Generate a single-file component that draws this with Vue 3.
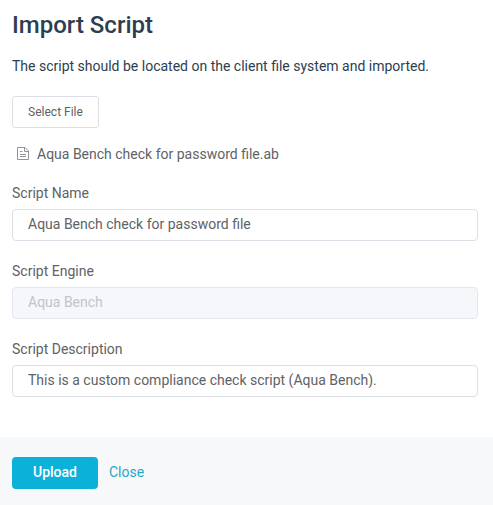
<script setup>
import { ref } from 'vue'

const fileName = 'Aqua Bench check for password file.ab'
const fields = ref([
  { id: 'name', label: 'Script Name', value: 'Aqua Bench check for password file', disabled: false },
  { id: 'engine', label: 'Script Engine', value: 'Aqua Bench', disabled: true },
  { id: 'description', label: 'Script Description', value: 'This is a custom compliance check script (Aqua Bench).', disabled: false },
])
</script>

<template>
  <form class="dialog" @submit.prevent>
    <main class="body">
      <h1 class="title">Import Script</h1>
      <p class="intro">The script should be located on the client file system and imported.</p>
      <button type="button" class="select">Select File</button>
      <div class="file">
        <svg class="file-icon" width="12" height="13" viewBox="0 0 12 13" fill="none" stroke="currentColor">
          <path d="M0.5 0.5H8L11.5 4V12.5H0.5Z" />
          <path d="M7.5 0.5V4.5H11.5M3 4.5H5.5M3 7.5H9M3 9.5H9" />
        </svg>
        <span>{{ fileName }}</span>
      </div>
      <div v-for="field in fields" :key="field.id" class="field">
        <label class="label" :for="field.id">{{ field.label }}</label>
        <input :id="field.id" v-model="field.value" class="input" :disabled="field.disabled" />
      </div>
    </main>
    <footer class="footer">
      <button type="submit" class="upload">Upload</button>
      <button type="button" class="close">Close</button>
    </footer>
  </form>
</template>

<style>
body {
  background: #fff;
}
</style>

<style scoped>
.dialog {
  display: flex;
  flex-direction: column;
  min-height: 505px;
  box-sizing: border-box;
  font-family: Roboto, "Liberation Sans", sans-serif;
  font-size: 14px;
  color: #606266;
}

.body {
  height: 437px;
  box-sizing: border-box;
  padding: 9px 15px 0 12px;
}

.title {
  margin: 0;
  font-size: 24px;
  font-weight: 500;
  line-height: 32px;
  color: #2c3e50;
}

.intro {
  margin: 15px 0 20px;
  line-height: 20px;
  color: #2c3e50;
}

button {
  display: block;
  box-sizing: border-box;
  height: 32px;
  margin: 0;
  padding: 0;
  font-family: inherit;
  cursor: pointer;
}

.select {
  width: 87px;
  border: 1px solid #dcdfe6;
  border-radius: 3px;
  background: #fff;
  color: #606266;
  font-size: 12px;
}

.file {
  display: flex;
  align-items: center;
  gap: 8px;
  height: 20px;
  margin: 16px 0 19px;
  padding-left: 5px;
}

.file-icon {
  flex: none;
  margin-bottom: 1px;
  color: #909399;
}

.field {
  height: 78px;
}

.label {
  display: block;
  height: 26px;
  line-height: 20px;
}

.input {
  display: block;
  width: 100%;
  height: 32px;
  box-sizing: border-box;
  margin: 0;
  padding: 0 15px 2px;
  border: 1px solid #dcdfe6;
  border-radius: 4px;
  background: #fff;
  color: #606266;
  font: inherit;
  outline: none;
}

.input:disabled {
  border-color: #e4e7ed;
  background: #f5f7fa;
  color: #c0c4cc;
}

.footer {
  display: flex;
  flex: 1;
  gap: 11px;
  padding: 20px 12px 16px;
  box-sizing: border-box;
  background: #f7f8fa;
}

.upload {
  width: 86px;
  padding-bottom: 2px;
  border: 0;
  border-radius: 4px;
  background: #0bb1d9;
  color: #fff;
  font-size: 14px;
  font-weight: 500;
}

.close {
  padding-bottom: 2px;
  border: 0;
  background: transparent;
  color: #27a7cb;
  font-size: 14px;
}
</style>
